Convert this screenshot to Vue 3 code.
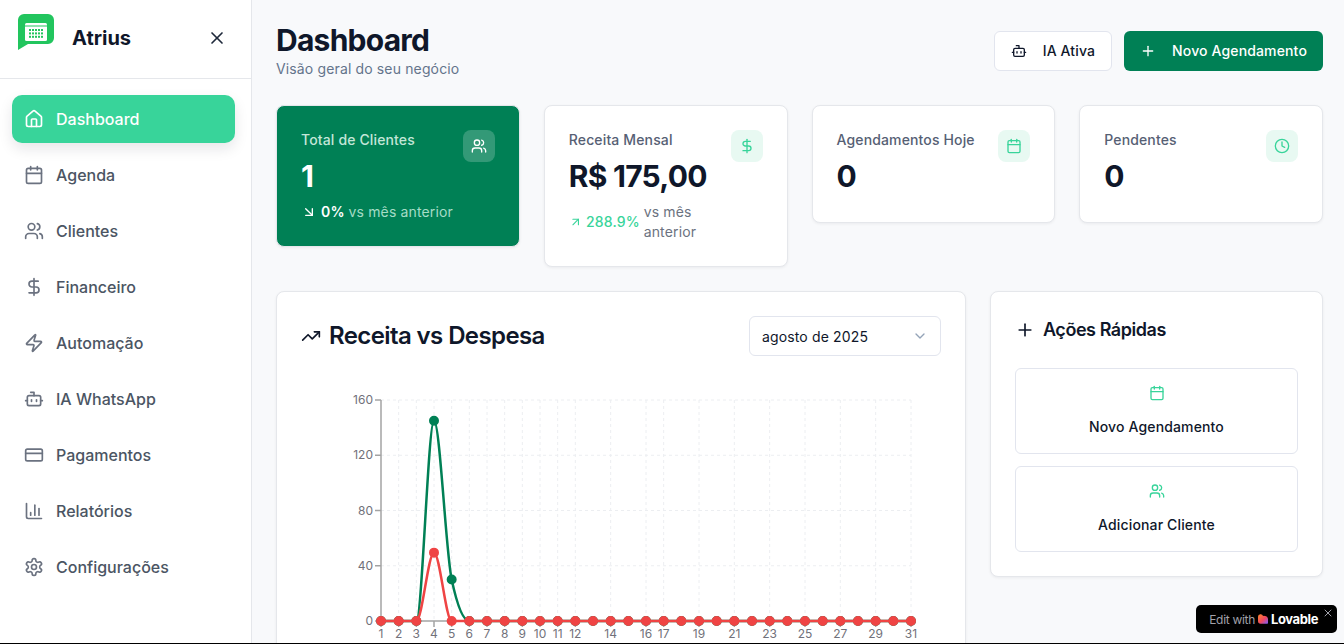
<script setup>
import { h } from 'vue'

// lucide style icons, drawn from a small table
const icons = {
  house: [['path', { d: 'M15 21v-8a1 1 0 0 0-1-1h-4a1 1 0 0 0-1 1v8' }], ['path', { d: 'M3 10a2 2 0 0 1 .709-1.528l7-5.999a2 2 0 0 1 2.582 0l7 5.999A2 2 0 0 1 21 10v9a2 2 0 0 1-2 2H5a2 2 0 0 1-2-2z' }]],
  calendar: [['path', { d: 'M8 2v4' }], ['path', { d: 'M16 2v4' }], ['rect', { x: 3, y: 4, width: 18, height: 18, rx: 2 }], ['path', { d: 'M3 10h18' }]],
  users: [['path', { d: 'M16 21v-2a4 4 0 0 0-4-4H6a4 4 0 0 0-4 4v2' }], ['circle', { cx: 9, cy: 7, r: 4 }], ['path', { d: 'M22 21v-2a4 4 0 0 0-3-3.87' }], ['path', { d: 'M16 3.13a4 4 0 0 1 0 7.75' }]],
  dollar: [['path', { d: 'M12 2v20' }], ['path', { d: 'M17 5H9.5a3.5 3.5 0 0 0 0 7h5a3.5 3.5 0 0 1 0 7H6' }]],
  zap: [['path', { d: 'M4 14a1 1 0 0 1-.78-1.63l9.9-10.2a.5.5 0 0 1 .86.46l-1.92 6.02A1 1 0 0 0 13 10h7a1 1 0 0 1 .78 1.63l-9.9 10.2a.5.5 0 0 1-.86-.46l1.92-6.02A1 1 0 0 0 11 14z' }]],
  bot: [['path', { d: 'M12 8V4H8' }], ['rect', { x: 4, y: 8, width: 16, height: 12, rx: 2 }], ['path', { d: 'M2 14h2' }], ['path', { d: 'M20 14h2' }], ['path', { d: 'M15 13v2' }], ['path', { d: 'M9 13v2' }]],
  card: [['rect', { x: 2, y: 5, width: 20, height: 14, rx: 2 }], ['path', { d: 'M2 10h20' }]],
  chart: [['path', { d: 'M3 3v16a2 2 0 0 0 2 2h16' }], ['path', { d: 'M18 17V9' }], ['path', { d: 'M13 17V5' }], ['path', { d: 'M8 17v-3' }]],
  settings: [['path', { d: 'M12.22 2h-.44a2 2 0 0 0-2 2v.18a2 2 0 0 1-1 1.73l-.43.25a2 2 0 0 1-2 0l-.15-.08a2 2 0 0 0-2.73.73l-.22.38a2 2 0 0 0 .73 2.73l.15.1a2 2 0 0 1 1 1.72v.51a2 2 0 0 1-1 1.74l-.15.09a2 2 0 0 0-.73 2.73l.22.38a2 2 0 0 0 2.73.73l.15-.08a2 2 0 0 1 2 0l.43.25a2 2 0 0 1 1 1.73V20a2 2 0 0 0 2 2h.44a2 2 0 0 0 2-2v-.18a2 2 0 0 1 1-1.73l.43-.25a2 2 0 0 1 2 0l.15.08a2 2 0 0 0 2.73-.73l.22-.39a2 2 0 0 0-.73-2.73l-.15-.08a2 2 0 0 1-1-1.74v-.5a2 2 0 0 1 1-1.74l.15-.09a2 2 0 0 0 .73-2.73l-.22-.38a2 2 0 0 0-2.73-.73l-.15.08a2 2 0 0 1-2 0l-.43-.25a2 2 0 0 1-1-1.73V4a2 2 0 0 0-2-2z' }], ['circle', { cx: 12, cy: 12, r: 3 }]],
  clock: [['circle', { cx: 12, cy: 12, r: 10 }], ['path', { d: 'M12 6v6l4 2' }]],
  plus: [['path', { d: 'M5 12h14' }], ['path', { d: 'M12 5v14' }]],
  trending: [['path', { d: 'M22 7l-8.5 8.5-5-5L2 17' }], ['path', { d: 'M16 7h6v6' }]],
  down: [['path', { d: 'm7 7 10 10' }], ['path', { d: 'M17 7v10H7' }]],
  up: [['path', { d: 'M7 7h10v10' }], ['path', { d: 'M7 17 17 7' }]],
  chevron: [['path', { d: 'm6 9 6 6 6-6' }]],
  x: [['path', { d: 'M18 6 6 18' }], ['path', { d: 'm6 6 12 12' }]]
}

const Icon = (props) =>
  h('svg', {
    width: props.size || 20,
    height: props.size || 20,
    viewBox: '0 0 24 24',
    fill: 'none',
    stroke: 'currentColor',
    'stroke-width': 2,
    'stroke-linecap': 'round',
    'stroke-linejoin': 'round'
  }, icons[props.name].map(([tag, attrs]) => h(tag, attrs)))
Icon.props = ['name', 'size']

const navItems = [
  { label: 'Dashboard', icon: 'house', active: true },
  { label: 'Agenda', icon: 'calendar' },
  { label: 'Clientes', icon: 'users' },
  { label: 'Financeiro', icon: 'dollar' },
  { label: 'Automação', icon: 'zap' },
  { label: 'IA WhatsApp', icon: 'bot' },
  { label: 'Pagamentos', icon: 'card' },
  { label: 'Relatórios', icon: 'chart' },
  { label: 'Configurações', icon: 'settings' }
]

const stats = [
  { label: 'Total de Clientes', value: '1', icon: 'users', primary: true, trend: 'down', delta: '0%', note: 'vs mês anterior' },
  { label: 'Receita Mensal', value: 'R$ 175,00', icon: 'dollar', trend: 'up', delta: '288.9%', note: 'vs mês anterior' },
  { label: 'Agendamentos Hoje', value: '0', icon: 'calendar' },
  { label: 'Pendentes', value: '0', icon: 'clock' }
]

const quickActions = [
  { label: 'Novo Agendamento', icon: 'calendar' },
  { label: 'Adicionar Cliente', icon: 'users' }
]

// chart geometry, in px inside the svg
const left = 80
const right = 610
const top = 20
const bottom = 241
const days = Array.from({ length: 31 }, (_, i) => i + 1)
const xAt = (day) => left + ((day - 1) * (right - left)) / 30
const yAt = (v) => bottom - ((bottom - top) * v) / 160

const xTicks = [1, 2, 3, 4, 5, 6, 7, 8, 9, 10, 11, 12, 14, 16, 17, 19, 21, 23, 25, 27, 29, 31]
const yTicks = [0, 40, 80, 120, 160]

const receita = days.map((d) => (d === 4 ? 145 : d === 5 ? 30 : 0))
const despesa = days.map((d) => (d === 4 ? 49.5 : 0))

// same curve as d3 curveMonotoneX
const monotonePath = (values) => {
  const pts = values.map((v, i) => [xAt(i + 1), yAt(v)])
  const dx = pts[1][0] - pts[0][0]
  const tangent = (i) => {
    if (i === 0) return 0
    if (i === pts.length - 1) return 0
    const s0 = (pts[i][1] - pts[i - 1][1]) / dx
    const s1 = (pts[i + 1][1] - pts[i][1]) / dx
    const p = (s0 + s1) / 2
    return (Math.sign(s0) + Math.sign(s1)) * Math.min(Math.abs(s0), Math.abs(s1), 0.5 * Math.abs(p)) || 0
  }
  let d = `M${pts[0][0]},${pts[0][1]}`
  for (let i = 1; i < pts.length; i++) {
    const [x0, y0] = pts[i - 1]
    const [x1, y1] = pts[i]
    d += `C${x0 + dx / 3},${y0 + (dx / 3) * tangent(i - 1)},${x1 - dx / 3},${y1 - (dx / 3) * tangent(i)},${x1},${y1}`
  }
  return d
}

const series = [
  { color: '#008055', values: receita, path: monotonePath(receita) },
  { color: '#ef4444', values: despesa, path: monotonePath(despesa) }
]
</script>

<template>
  <div class="app">
    <aside class="sidebar">
      <div class="brand">
        <svg class="logo" width="48" height="48" viewBox="0 0 48 48">
          <path d="M12 0H36a6 6 0 0 1 6 6V24a6 6 0 0 1-6 6H16L6 36V6a6 6 0 0 1 6-6Z" fill="#22c55e" />
          <rect x="13" y="9" width="22" height="18" rx="1.5" fill="#fff" />
          <rect x="13" y="11.5" width="22" height="1" fill="#22c55e" />
          <g fill="#22c55e">
            <template v-for="row in [15, 18.4, 21.8]" :key="row">
              <rect v-for="col in [17, 20, 23, 26, 29]" :key="col" :x="col" :y="row" width="2" height="2" />
            </template>
          </g>
        </svg>
        <span class="brand-name">Atrius</span>
        <Icon class="close" name="x" :size="20" />
      </div>
      <nav class="nav">
        <a v-for="item in navItems" :key="item.label" class="nav-item" :class="{ active: item.active }">
          <Icon class="nav-icon" :name="item.icon" :size="20" />
          <span>{{ item.label }}</span>
        </a>
      </nav>
    </aside>

    <main class="main">
      <header class="page-head">
        <div>
          <h1>Dashboard</h1>
          <p>Visão geral do seu negócio</p>
        </div>
        <div class="head-actions">
          <button class="btn btn-outline"><Icon name="bot" :size="16" />IA Ativa</button>
          <button class="btn btn-primary"><Icon name="plus" :size="16" />Novo Agendamento</button>
        </div>
      </header>

      <section class="stats">
        <div v-for="s in stats" :key="s.label" class="stat" :class="{ primary: s.primary }">
          <div class="stat-body">
            <div class="stat-label">{{ s.label }}</div>
            <div class="stat-value">{{ s.value }}</div>
            <div v-if="s.trend" class="stat-delta">
              <Icon class="delta-icon" :name="s.trend" :size="16" />
              <span class="delta-num">{{ s.delta }}</span>
              <span class="delta-note">{{ s.note }}</span>
            </div>
          </div>
          <div class="stat-icon"><Icon :name="s.icon" :size="16" /></div>
        </div>
      </section>

      <section class="lower">
        <div class="panel chart-panel">
          <div class="chart-head">
            <h2><Icon name="trending" :size="20" />Receita vs Despesa</h2>
            <div class="select">
              <span>agosto de 2025</span>
              <Icon class="select-chevron" name="chevron" :size="16" />
            </div>
          </div>
          <svg class="chart" width="640" height="280" viewBox="0 0 640 280">
            <g class="grid">
              <line v-for="t in yTicks.slice(1)" :key="t" :x1="left" :x2="right" :y1="yAt(t)" :y2="yAt(t)" />
              <line v-for="t in xTicks.slice(1)" :key="t" :x1="xAt(t)" :x2="xAt(t)" :y1="top" :y2="bottom" />
            </g>
            <g class="axis">
              <line :x1="left" :x2="left" :y1="top" :y2="bottom" />
              <line :x1="left" :x2="right" :y1="bottom" :y2="bottom" />
              <line v-for="t in yTicks" :key="t" :x1="left - 6" :x2="left" :y1="yAt(t)" :y2="yAt(t)" />
              <line v-for="t in xTicks" :key="t" :x1="xAt(t)" :x2="xAt(t)" :y1="bottom" :y2="bottom + 6" />
            </g>
            <g class="tick-text">
              <text v-for="t in yTicks" :key="t" :x="left - 8" :y="yAt(t) + 4" text-anchor="end">{{ t }}</text>
              <text v-for="t in xTicks" :key="t" :x="xAt(t)" :y="bottom + 17" text-anchor="middle">{{ t }}</text>
            </g>
            <g v-for="line in series" :key="line.color">
              <path :d="line.path" fill="none" :stroke="line.color" stroke-width="2.5" />
              <circle v-for="(v, i) in line.values" :key="i" :cx="xAt(i + 1)" :cy="yAt(v)" r="4" :fill="line.color" :stroke="line.color" stroke-width="2" />
            </g>
          </svg>
        </div>

        <div class="panel quick-panel">
          <h3><Icon name="plus" :size="20" />Ações Rápidas</h3>
          <div class="quick-list">
            <button v-for="q in quickActions" :key="q.label" class="quick-btn">
              <Icon class="quick-icon" :name="q.icon" :size="16" />
              <span>{{ q.label }}</span>
            </button>
          </div>
        </div>
      </section>
    </main>

    <div class="lovable">
      <span class="edit">Edit with</span>
      <svg width="10" height="10" viewBox="0 0 13 13">
        <defs>
          <linearGradient id="lov" x1="0" y1="0" x2="1" y2="1">
            <stop offset="0" stop-color="#ff8a2b" />
            <stop offset="0.55" stop-color="#f0475f" />
            <stop offset="1" stop-color="#7a5cff" />
          </linearGradient>
        </defs>
        <path d="M0 3.6a3.4 3.4 0 0 1 6.6-1.1A3 3 0 0 1 9 2.6c2.4 0 4 1.8 4 4.2V11.6a1 1 0 0 1-1 1H3.4A3.4 3.4 0 0 1 0 9.2Z" fill="url(#lov)" />
      </svg>
      <span class="lov-name">Lovable</span>
      <Icon class="lov-x" name="x" :size="12" />
    </div>
    <div class="edge"></div>
  </div>
</template>

<style>
html,
body {
  margin: 0;
  background: #f8f9fb;
}
</style>

<style scoped>
.app {
  display: flex;
  height: 100vh;
  overflow: hidden;
  font-family: Inter, 'Noto Sans', sans-serif;
  color: #0f172a;
  background: #f8f9fb;
}

.sidebar {
  width: 251px;
  flex-shrink: 0;
  background: #fff;
  border-right: 1px solid #e5e7eb;
}

.brand {
  display: flex;
  align-items: center;
  height: 76px;
  padding: 0 16px 2px 12px;
  border-bottom: 1px solid #e5e7eb;
}

.logo {
  margin-right: 12px;
}

.brand-name {
  font-size: 20px;
  font-weight: 700;
  color: #0f172a;
}

.close {
  margin-left: auto;
  margin-right: 8px;
  color: #1e293b;
}

.nav {
  display: flex;
  flex-direction: column;
  gap: 8px;
  padding: 16px 16px 16px 12px;
}

.nav-item {
  display: flex;
  align-items: center;
  gap: 12px;
  height: 48px;
  padding: 0 12px;
  border-radius: 10px;
  font-size: 16px;
  font-weight: 500;
  color: #4b5563;
}

.nav-icon {
  color: #6b7280;
}

.nav-item.active {
  background: #38d49a;
  color: #fff;
  box-shadow: 0 6px 14px rgba(15, 23, 42, 0.1);
}

.nav-item.active .nav-icon {
  color: #fff;
}

.main {
  flex: 1;
  min-width: 0;
  padding: 22px 21px 0 24px;
}

.page-head {
  display: flex;
  align-items: center;
  justify-content: space-between;
  margin-bottom: 26px;
}

h1 {
  margin: 0;
  font-size: 30px;
  line-height: 36px;
  font-weight: 700;
  letter-spacing: -0.75px;
}

.page-head p {
  margin: 1px 0 0;
  font-size: 14px;
  line-height: 20px;
  letter-spacing: 0.14px;
  color: #64748b;
}

.head-actions {
  display: flex;
  gap: 12px;
}

.btn {
  display: flex;
  align-items: center;
  gap: 16px;
  height: 40px;
  padding: 0 16px;
  border-radius: 6px;
  font-family: inherit;
  font-size: 14px;
  font-weight: 500;
  letter-spacing: 0.14px;
}

.btn-outline {
  background: #fff;
  border: 1px solid #e2e5ee;
  color: #0f172a;
}

.btn-primary {
  background: #008055;
  border: 0;
  color: #fff;
}

.stats {
  display: grid;
  grid-template-columns: repeat(4, 1fr);
  gap: 24px;
  align-items: start;
  margin-bottom: 24px;
}

.stat {
  display: flex;
  justify-content: space-between;
  padding: 24px;
  background: #fff;
  border: 1px solid #e5e7eb;
  border-radius: 8px;
  box-shadow: 0 1px 3px rgba(15, 23, 42, 0.06);
}

.stat.primary {
  background: #008055;
  border-color: #e5e7eb;
  color: #fff;
}

.stat-body {
  min-width: 0;
}

.stat-label {
  font-size: 14px;
  line-height: 20px;
  font-weight: 500;
  letter-spacing: 0.14px;
  color: #566074;
}

.primary .stat-label {
  color: #c3e6d8;
}

.stat-value {
  margin: 8px 0 4px;
  font-size: 30px;
  line-height: 36px;
  font-weight: 700;
  letter-spacing: -0.75px;
  white-space: nowrap;
}

.stat-delta {
  display: flex;
  align-items: center;
  gap: 4px;
  padding-top: 4px;
  font-size: 14px;
  line-height: 20px;
  letter-spacing: 0.14px;
  color: #38d49a;
}

.primary .stat-delta {
  color: #fff;
}

.delta-num {
  font-weight: 500;
}

.primary .delta-num {
  font-weight: 600;
}

.delta-note {
  color: #6b7280;
}

.primary .delta-note {
  color: #a5dcc6;
}

.stat-icon {
  display: flex;
  align-items: center;
  justify-content: center;
  width: 32px;
  height: 32px;
  flex-shrink: 0;
  border-radius: 8px;
  background: #e8f9f2;
  color: #38d49a;
}

.primary .stat-icon {
  background: rgba(255, 255, 255, 0.2);
  color: #fff;
}

.lower {
  display: grid;
  grid-template-columns: 690px 1fr;
  gap: 24px;
  align-items: start;
}

.panel {
  padding: 24px;
  background: #fff;
  border: 1px solid #e5e7eb;
  border-radius: 8px;
  box-shadow: 0 1px 3px rgba(15, 23, 42, 0.06);
}

.chart-head {
  display: flex;
  align-items: center;
  justify-content: space-between;
}

h2 {
  display: flex;
  align-items: center;
  gap: 8px;
  margin: 0;
  font-size: 24px;
  line-height: 32px;
  font-weight: 600;
  letter-spacing: -0.6px;
}

.select {
  display: flex;
  align-items: center;
  justify-content: space-between;
  width: 192px;
  height: 40px;
  box-sizing: border-box;
  padding: 0 12px;
  background: #fff;
  border: 1px solid #e2e5ee;
  border-radius: 6px;
  font-size: 14px;
  letter-spacing: 0.14px;
}

.select-chevron {
  color: #94a3b8;
}

.chart {
  display: block;
  margin-top: 24px;
  font-size: 12px;
}

.grid line {
  stroke: #eceef1;
  stroke-dasharray: 3 3;
}

.axis line {
  stroke: #a3a3a3;
  stroke-width: 1.5;
}

.tick-text text {
  fill: #71717a;
}

h3 {
  display: flex;
  align-items: center;
  gap: 8px;
  margin: 0 0 24px;
  font-size: 18px;
  line-height: 28px;
  font-weight: 600;
  letter-spacing: -0.45px;
}

.quick-list {
  display: flex;
  flex-direction: column;
  gap: 12px;
}

.quick-btn {
  display: flex;
  flex-direction: column;
  align-items: center;
  gap: 16px;
  padding: 16px;
  background: #fff;
  border: 1px solid #e2e5ee;
  border-radius: 6px;
  font-family: inherit;
  font-size: 14px;
  line-height: 20px;
  font-weight: 500;
  letter-spacing: 0.14px;
  color: #0f172a;
}

.quick-icon {
  color: #38d49a;
}

.lovable {
  position: fixed;
  right: 7px;
  bottom: 11px;
  display: flex;
  align-items: center;
  gap: 3px;
  height: 28px;
  padding: 0 19px 0 13px;
  border-radius: 5px;
  background: #000;
  font-size: 12px;
  letter-spacing: -0.3px;
}

.edit {
  color: #a1a1aa;
}

.lov-name {
  font-size: 13px;
  font-weight: 700;
  letter-spacing: -0.4px;
  color: #fff;
}

.lov-x {
  position: absolute;
  top: 2px;
  right: 3px;
  color: #a1a1aa;
}

.edge {
  position: fixed;
  left: 0;
  right: 0;
  bottom: 0;
  height: 1px;
  background: #000;
}
</style>
